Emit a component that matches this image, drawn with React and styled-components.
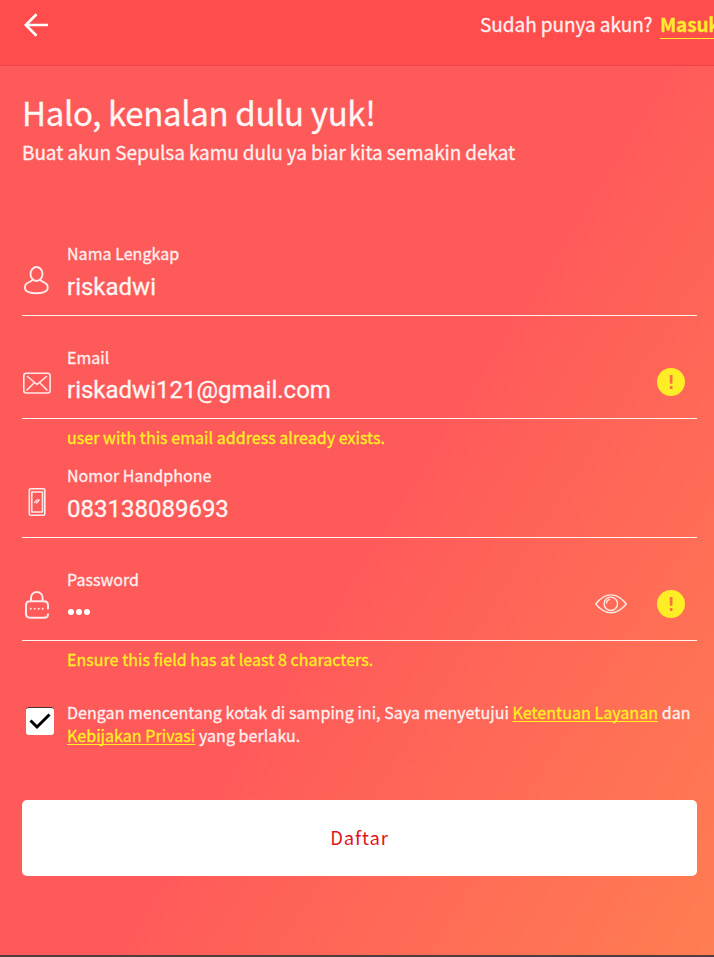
import React from "react";
import styled, { createGlobalStyle } from "styled-components";

const sans = `"Noto Sans CJK JP", "Noto Sans CJK SC", sans-serif`;

const Global = createGlobalStyle`
  * { box-sizing: border-box; }
  html, body { margin: 0; padding: 0; overflow: hidden; }
`;

const Page = styled.div`
  width: 714px;
  height: 957px;
  display: flex;
  flex-direction: column;
  overflow: hidden;
  font-family: ${sans};
  font-weight: 400;
  letter-spacing: 0.04px;
  -webkit-text-stroke-width: 0.3px;
  color: #fff0f0;
  background: linear-gradient(122deg, #ff5a5a 54%, #ff7f52 102%);
  border-bottom: 2px solid #553c3e;
`;

const Header = styled.header`
  flex: none;
  height: 66px;
  display: flex;
  justify-content: space-between;
  padding: 11px 0 0 24px;
  background: #ff4d4d;
  border-bottom: 1px solid #e94449;
`;

const BackIcon = styled.svg`
  width: 24px;
  height: 24px;
  margin-top: 2px;
  fill: none;
  stroke: #fff;
  stroke-width: 2.7;
`;

const LoginPrompt = styled.div`
  flex: none;
  width: 234px;
  display: flex;
  gap: 8px;
  white-space: nowrap;
  font-size: 19px;
  line-height: 26px;
`;

const PromptText = styled.span`
  flex: none;
  width: 172px;
  letter-spacing: -0.05px;
`;

const LoginLink = styled.a`
  flex: none;
  height: 28px;
  font-weight: 700;
  letter-spacing: -0.15px;
  color: #ffe92b;
  border-bottom: 1px solid #ffe92b;
`;

const Main = styled.main`
  display: flex;
  flex-direction: column;
  padding: 22px 17px 0 22px;
`;

const Title = styled.h1`
  margin: 0;
  font-size: 33px;
  line-height: 48px;
  font-weight: 400;
  letter-spacing: -0.35px;
  color: #fff6f6;
  white-space: nowrap;
`;

const Subtitle = styled.p`
  margin: 1px 0 77px;
  font-size: 19px;
  line-height: 30px;
  letter-spacing: -0.09px;
  white-space: nowrap;
`;

const Field = styled.div`
  height: 72px;
  margin-bottom: ${(p) => p.$gap}px;
  display: grid;
  grid-template-columns: 45px 1fr auto;
  border-bottom: 1px solid #fff2ee;
`;

const IconSlot = styled.div`
  padding: 21px 0 0 1px;
  svg { display: block; width: 28px; height: 30px; }
`;

const Texts = styled.div`
  display: flex;
  flex-direction: column;
  padding-top: 21px;
`;

const Label = styled.label`
  height: 24px;
  margin-top: ${(p) => -24 + p.$shift}px;
  margin-bottom: ${(p) => 6 - p.$shift}px;
  font-size: 16px;
  line-height: 24px;
  white-space: nowrap;
`;

const Value = styled.div`
  font-family: Roboto, sans-serif;
  font-size: 24px;
  line-height: 32px;
  letter-spacing: 0;
  color: #fff6f4;
  white-space: nowrap;
`;

const Dots = styled.div`
  display: flex;
  gap: 2px;
  margin: 13px 0 0 1px;
`;

const Dot = styled.i`
  width: 6px;
  height: 6px;
  border-radius: 50%;
  background: #fff;
`;

const Actions = styled.div`
  display: flex;
  align-items: center;
  gap: 30px;
  height: 28px;
  margin: 21px 12px 0 0;
`;

const EyeIcon = styled.svg`
  width: 32px;
  height: 20px;
  fill: none;
  stroke: #ffe8e2;
  stroke-width: 1.4;
`;

const AlertIcon = styled.svg`
  width: 28px;
  height: 28px;
  display: block;
`;

const ErrorText = styled.p`
  margin: 0 0 ${(p) => p.$gap}px 45px;
  font-size: 16px;
  line-height: 24px;
  color: #fff01f;
  white-space: nowrap;
`;

const Agreement = styled.div`
  display: grid;
  grid-template-columns: 45px 1fr;
  margin-bottom: 53px;
`;

const Checkbox = styled.div`
  width: 28px;
  height: 28px;
  margin: 6px 0 0 4px;
  border-radius: 3px;
  background: #fff;
  border-top: 1px solid #4b3030;
  svg { display: block; width: 28px; height: 26px; }
`;

const AgreementText = styled.div`
  font-size: 16px;
  line-height: 23px;
  letter-spacing: 0.055px;
  white-space: nowrap;
`;

const TextLink = styled.a`
  color: #fff01f;
  text-decoration: underline;
  text-decoration-thickness: 1px;
  text-underline-offset: 2px;
  text-decoration-skip-ink: none;
`;

const SubmitButton = styled.button`
  height: 76px;
  border: 0;
  padding: 0 0 2px;
  border-radius: 5px;
  background: #fff;
  color: #e0151b;
  font-family: ${sans};
  font-size: 18.5px;
  letter-spacing: 0.9px;
  -webkit-text-stroke-width: 0;
`;

const line = { fill: "none", stroke: "#ffe9e9", strokeLinecap: "round", strokeLinejoin: "round" };

const UserIcon = () => (
  <svg viewBox="0 0 28 30" {...line} strokeWidth="1.900">
    <ellipse cx="13.500" cy="9" rx="6" ry="7" />
    <path d="M9.700 14.800c-.5 2.200-7.700 2.200-7.700 6.500v2.200c0 6.300 22.600 6.300 22.600 0v-2.200c0-4.300-7-4.300-7.500-6.500" />
  </svg>
);

const MailIcon = () => (
  <svg viewBox="0 0 28 30" {...line} strokeWidth="1.600">
    <rect x=".8" y="5.200" width="26.300" height="19.800" rx="2.500" />
    <path d="M4.500 8.500 14 16.500l9.500-8M4 22l7.500-7.500M24 22l-7.500-7.500" />
  </svg>
);

const PhoneIcon = () => (
  <svg viewBox="0 0 28 30" {...line} strokeWidth="1.600">
    <rect x="6.300" y="1.800" width="15.500" height="26.500" rx="1.300" />
    <rect x="8.800" y="5" width="10.700" height="20" strokeWidth="1.500" />
    <path d="M11.500 15.500l2.500-2.500h1M13.500 16l2.500-2.500v-1" strokeWidth="1.200" />
  </svg>
);

const LockIcon = () => (
  <svg viewBox="0 0 28 30" {...line} strokeWidth="2">
    <path d="M25 18.500v-3c0-3-1.500-4.200-4.200-4.200H7C4.300 11.300 3 12.500 3 15.500v8c0 3 1.300 4.200 4 4.200h13.800c2.700 0 4.200-1.200 4.200-3.500M8 11V7.700a5.800 5.800 0 0 1 11.600 0V11" />
    <path d="M7.700 18.800h.01M11.700 18.800h.01M15.700 18.800h.01M19.700 18.800h.01" />
  </svg>
);

const Alert = () => (
  <AlertIcon viewBox="0 0 28 28">
    <circle cx="14" cy="14" r="14" fill="#ffed26" />
    <path d="M12.700 7h2.900l-.2 8.700h-2.500z" fill="#f5743f" />
    <rect x="12.800" y="18" width="2.700" height="3" rx=".6" fill="#f5743f" />
  </AlertIcon>
);

const Eye = () => (
  <EyeIcon viewBox="0 0 32 20">
    <path d="M.7 10Q8 .9 16 .9T31.300 10Q24 18.800 16 18.800T.7 10Z" />
    <circle cx="15.800" cy="9.800" r="6.700" />
    <path d="M11.500 9.500a4 4 0 0 1 3.500-4" />
  </EyeIcon>
);

const FormField = ({ icon, label, labelShift = 0, gap, actions, children }) => (
  <Field $gap={gap}>
    <IconSlot>{icon}</IconSlot>
    <Texts>
      <Label $shift={labelShift}>{label}</Label>
      {children}
    </Texts>
    {actions && <Actions>{actions}</Actions>}
  </Field>
);

export default function App() {
  return (
    <>
      <Global />
      <Page>
        <Header>
          <BackIcon viewBox="0 0 24 24">
            <path d="M24 12H2M12.500 1.200 1.800 12l10.700 10.800" />
          </BackIcon>
          <LoginPrompt>
            <PromptText>Sudah punya akun?</PromptText>
            <LoginLink>Masuk</LoginLink>
          </LoginPrompt>
        </Header>
        <Main>
          <Title>Halo, kenalan dulu yuk!</Title>
          <Subtitle>Buat akun Sepulsa kamu dulu ya biar kita semakin dekat</Subtitle>
          <FormField icon={<UserIcon />} label="Nama Lengkap" gap={31}>
            <Value>riskadwi</Value>
          </FormField>
          <FormField icon={<MailIcon />} label="Email" labelShift={1} gap={6} actions={<Alert />}>
            <Value>riskadwi121@gmail.com</Value>
          </FormField>
          <ErrorText $gap={17}>user with this email address already exists.</ErrorText>
          <FormField icon={<PhoneIcon />} label="Nomor Handphone" gap={31}>
            <Value>083138089693</Value>
          </FormField>
          <FormField icon={<LockIcon />} label="Password" labelShift={1} gap={6} actions={<><Eye /><Alert /></>}>
            <Dots><Dot /><Dot /><Dot /></Dots>
          </FormField>
          <ErrorText $gap={30}>Ensure this field has at least 8 characters.</ErrorText>
          <Agreement>
            <Checkbox>
              <svg viewBox="0 0 28 26" fill="none" stroke="#000" strokeWidth="3">
                <path d="M4.500 12.500l6.500 6.500L23.500 6.500" />
              </svg>
            </Checkbox>
            <AgreementText>
              Dengan mencentang kotak di samping ini, Saya menyetujui <TextLink>Ketentuan Layanan</TextLink> dan
              <br />
              <TextLink>Kebijakan Privasi</TextLink> yang berlaku.
            </AgreementText>
          </Agreement>
          <SubmitButton>Daftar</SubmitButton>
        </Main>
      </Page>
    </>
  );
}
